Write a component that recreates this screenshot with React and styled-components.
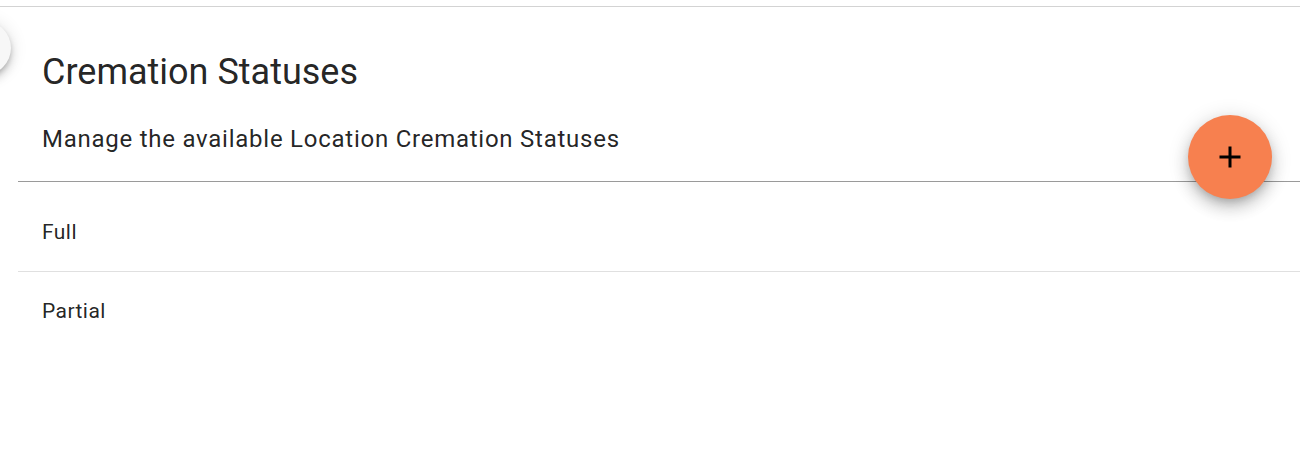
import React from 'react';
import styled, {createGlobalStyle} from "styled-components";

const GlobalStyle = createGlobalStyle`
body {
  margin: 0;
  background: #fff;
  font-family: Roboto, "Liberation Sans", sans-serif;
  color: rgba(0, 0, 0, 0.87);
}
`

const Page = styled.div`
position: relative;
width: 1300px;
height: 452px;
overflow: hidden;
background: #fff;
`

const TopRule = styled.div`
height: 6px;
border-bottom: 1px solid #d3d3d3;
`

const Panel = styled.section`
position: relative;
margin-left: 18px;
`

const Header = styled.header`
padding: 45px 24px 0;
height: 129px;
border-bottom: 1px solid #9a9a9a;
`

const Title = styled.h1`
margin: 0;
font-size: 36px;
font-weight: 400;
line-height: 40px;
letter-spacing: 0;
`

const Subtitle = styled.p`
margin: 29px 0 0;
font-size: 24px;
font-weight: 400;
line-height: 36px;
letter-spacing: 0.75px;
`

const List = styled.ul`
list-style: none;
margin: 0;
padding: 11px 0 0;
`

const Row = styled.li`
padding: 13px 24px;
font-size: 21px;
line-height: 52px;
letter-spacing: 0.45px;
border-bottom: ${p => p.last ? "none" : "1px solid #e0e0e0"};
`

const Fab = styled.button`
position: absolute;
top: 115px;
right: 28px;
width: 84px;
height: 84px;
border: none;
border-radius: 50%;
background: #f7804f;
display: flex;
align-items: center;
justify-content: center;
padding: 0;
box-shadow: 0 5px 8px -3px rgba(0,0,0,0.2), 0 9px 15px 1px rgba(0,0,0,0.14), 0 3px 20px 2px rgba(0,0,0,0.12);
cursor: pointer;
`

const DrawerToggle = styled.button`
position: absolute;
top: 21px;
left: -43px;
width: 54px;
height: 54px;
border: none;
border-radius: 50%;
background: #f7f7f7;
box-shadow: 0 3px 5px -1px rgba(0,0,0,0.2), 0 6px 10px 0 rgba(0,0,0,0.14), 0 1px 18px 0 rgba(0,0,0,0.12);
`

const statuses = ["Full", "Partial"];

export default function App() {
    return (
        <Page>
            <GlobalStyle />
            <TopRule />
            <DrawerToggle aria-label="toggle drawer" />
            <Panel>
                <Header>
                    <Title>Cremation Statuses</Title>
                    <Subtitle>Manage the available Location Cremation Statuses</Subtitle>
                </Header>
                <List>
                    {statuses.map((name, i) =>
                        <Row key={name} last={i === statuses.length - 1}>{name}</Row>
                    )}
                </List>
            </Panel>
            <Fab aria-label="add">
                <svg width="36" height="36" viewBox="0 0 24 24">
                    <path d="M19 13h-6v6h-2v-6H5v-2h6V5h2v6h6v2z" fill="#000" />
                </svg>
            </Fab>
        </Page>
    )
}
